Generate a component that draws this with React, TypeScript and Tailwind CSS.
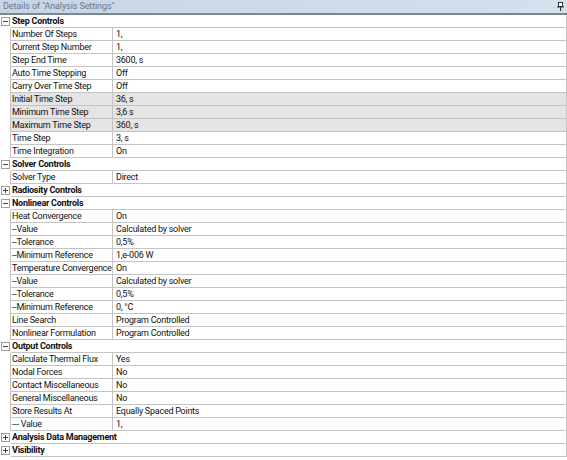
type Row =
  | { kind: 'group'; label: string; open: boolean }
  | { kind: 'item'; label: string; value: string; shaded?: boolean }

const rows: Row[] = [
  { kind: 'group', label: 'Step Controls', open: true },
  { kind: 'item', label: 'Number Of Steps', value: '1,' },
  { kind: 'item', label: 'Current Step Number', value: '1,' },
  { kind: 'item', label: 'Step End Time', value: '3600, s' },
  { kind: 'item', label: 'Auto Time Stepping', value: 'Off' },
  { kind: 'item', label: 'Carry Over Time Step', value: 'Off' },
  { kind: 'item', label: 'Initial Time Step', value: '36, s', shaded: true },
  { kind: 'item', label: 'Minimum Time Step', value: '3,6 s', shaded: true },
  { kind: 'item', label: 'Maximum Time Step', value: '360, s', shaded: true },
  { kind: 'item', label: 'Time Step', value: '3, s' },
  { kind: 'item', label: 'Time Integration', value: 'On' },
  { kind: 'group', label: 'Solver Controls', open: true },
  { kind: 'item', label: 'Solver Type', value: 'Direct' },
  { kind: 'group', label: 'Radiosity Controls', open: false },
  { kind: 'group', label: 'Nonlinear Controls', open: true },
  { kind: 'item', label: 'Heat Convergence', value: 'On' },
  { kind: 'item', label: '--Value', value: 'Calculated by solver' },
  { kind: 'item', label: '--Tolerance', value: '0,5%' },
  { kind: 'item', label: '--Minimum Reference', value: '1,e-006 W' },
  { kind: 'item', label: 'Temperature Convergence', value: 'On' },
  { kind: 'item', label: '--Value', value: 'Calculated by solver' },
  { kind: 'item', label: '--Tolerance', value: '0,5%' },
  { kind: 'item', label: '--Minimum Reference', value: '0, °C' },
  { kind: 'item', label: 'Line Search', value: 'Program Controlled' },
  { kind: 'item', label: 'Nonlinear Formulation', value: 'Program Controlled' },
  { kind: 'group', label: 'Output Controls', open: true },
  { kind: 'item', label: 'Calculate Thermal Flux', value: 'Yes' },
  { kind: 'item', label: 'Nodal Forces', value: 'No' },
  { kind: 'item', label: 'Contact Miscellaneous', value: 'No' },
  { kind: 'item', label: 'General Miscellaneous', value: 'No' },
  { kind: 'item', label: 'Store Results At', value: 'Equally Spaced Points' },
  { kind: 'item', label: '--- Value', value: '1,' },
  { kind: 'group', label: 'Analysis Data Management', open: false },
  { kind: 'group', label: 'Visibility', open: false },
]

function Toggle({ open }: { open: boolean }) {
  return (
    <svg width="9" height="9" viewBox="0 0 9 9" className="block">
      <rect x="0.5" y="0.5" width="8" height="8" fill="#fff" stroke="#a0a0a0" />
      <line x1="2" y1="4.5" x2="7" y2="4.5" stroke="#444" />
      {!open && <line x1="4.5" y1="2" x2="4.5" y2="7" stroke="#444" />}
    </svg>
  )
}

function PinIcon() {
  return (
    <svg width="7" height="9" viewBox="0 0 7 9" className="block">
      <rect x="1.5" y="0.5" width="4" height="4" fill="#fff" stroke="#333" />
      <line x1="0" y1="5" x2="7" y2="5" stroke="#333" />
      <line x1="3.5" y1="5" x2="3.5" y2="9" stroke="#333" />
    </svg>
  )
}

export default function App() {
  return (
    <div
      className="h-[460px] w-[567px] overflow-hidden whitespace-nowrap bg-white text-[9px] leading-none tracking-[-0.25px] text-[#111]"
      style={{ fontFamily: 'Roboto, "Liberation Sans", sans-serif' }}
    >
      <div className="flex h-[13px] items-center justify-between bg-gradient-to-r from-[#c6d5e6] to-[#d4e0ed] pl-[3px] pr-[3px]">
        <span className="text-[9px] tracking-[-0.1px] text-[#6b7784]">Details of "Analysis Settings"</span>
        <PinIcon />
      </div>
      <div className="h-[2px] bg-[#7f868d]" />
      <div className="flex flex-col">
        {rows.map((r, i) =>
          r.kind === 'group' ? (
            <div key={i} className="flex h-[13px]">
              <div className="flex w-[11px] items-center justify-center">
                <Toggle open={r.open} />
              </div>
              <div className="flex flex-1 items-center border-b border-r border-[#c4c4c4] pl-[1px] font-bold">
                {r.label}
              </div>
            </div>
          ) : (
            <div key={i} className="flex h-[13px]">
              <div className="w-[11px] border-r border-[#c4c4c4]" />
              <div
                className={`flex flex-1 border-b border-r border-[#c4c4c4] ${
                  r.shaded ? 'bg-[#e4e4e4]' : ''
                }`}
              >
                <div className="flex w-[102px] items-center overflow-hidden border-r border-[#c4c4c4] pl-[1px]">
                  {r.label}
                </div>
                <div className="flex flex-1 items-center pl-[3px]">{r.value}</div>
              </div>
            </div>
          )
        )}
      </div>
    </div>
  )
}
